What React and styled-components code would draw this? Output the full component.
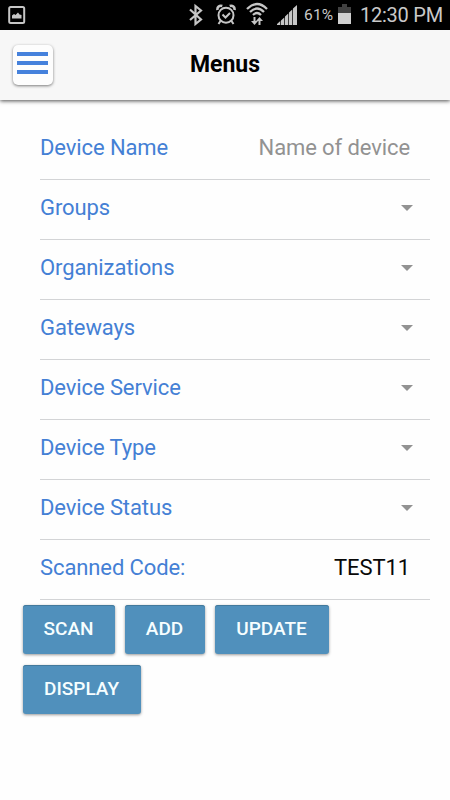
import styled, { createGlobalStyle } from "styled-components";

const GlobalStyle = createGlobalStyle`
  body {
    margin: 0;
    background: #fefefe;
    font-family: Roboto, sans-serif;
  }
`;

const Screen = styled.div`
  display: flex;
  flex-direction: column;
  width: 450px;
  height: 800px;
  overflow: hidden;
  background: #fefefe;
`;

const StatusBar = styled.div`
  display: flex;
  align-items: center;
  flex: none;
  box-sizing: border-box;
  height: 30px;
  padding: 0 7px 0 8px;
  background: #000;
  color: #c9c9c9;
`;

const StatusIcon = styled.svg`
  flex: none;
  display: block;
  width: ${({ $width }) => $width}px;
  height: 30px;
  margin-left: ${({ $gap }) => $gap || 0}px;
  fill: none;
  stroke: #c6c6c6;
`;

const StatusRight = styled.div`
  display: flex;
  align-items: center;
  margin-left: auto;
`;

const Percent = styled.span`
  width: 31px;
  margin-left: 7px;
  font-size: 15.5px;
  letter-spacing: 0.2px;
  line-height: 32px;
  white-space: nowrap;
`;

const Clock = styled.span`
  width: 83px;
  margin-left: 9px;
  font-size: 20px;
  letter-spacing: -0.25px;
  line-height: 32px;
  white-space: nowrap;
`;

const Header = styled.header`
  display: grid;
  grid-template-columns: 42px 1fr 42px;
  align-items: center;
  flex: none;
  box-sizing: border-box;
  height: 70px;
  padding: 0 12px;
  background: #f7f7f7;
  box-shadow: 0 1px 4px rgba(0, 0, 0, 0.7);
`;

const MenuButton = styled.button`
  display: flex;
  flex-direction: column;
  gap: 5px;
  box-sizing: border-box;
  width: 40px;
  height: 40px;
  margin-left: 0.5px;
  padding: 7px 4.5px;
  border: 0;
  border-radius: 5px;
  background: #fdfdfd;
  box-shadow: 0 1px 3px rgba(0, 0, 0, 0.5);
`;

const MenuLine = styled.span`
  flex: none;
  height: 4px;
  background: #4581dc;
`;

const Title = styled.h1`
  margin: 0;
  color: #000;
  font-size: 23px;
  font-weight: 700;
  line-height: 30px;
  text-align: center;
`;

const Form = styled.div`
  display: flex;
  flex-direction: column;
  padding: 20px 20px 0 40px;
`;

const Row = styled.div`
  display: flex;
  align-items: center;
  justify-content: space-between;
  box-sizing: border-box;
  height: 60px;
  padding: 0 20px 4px 0;
  border-bottom: 1px solid #d3d4d6;
`;

const Label = styled.span`
  color: #4480d5;
  font-size: 22px;
  letter-spacing: -0.1px;
  line-height: 28px;
`;

const Value = styled.span`
  color: ${({ $placeholder }) => ($placeholder ? "#929292" : "#080808")};
  font-size: 22px;
  letter-spacing: -0.1px;
  line-height: 28px;
`;

const Arrow = styled.span`
  margin: 0 -3px 0 0;
  border: solid transparent;
  border-width: 6px 6px 0;
  border-top-color: #929292;
`;

const Actions = styled.div`
  display: flex;
  flex-wrap: wrap;
  gap: 11px 10px;
  padding: 5px 23px 0;
`;

const ActionButton = styled.button`
  box-sizing: border-box;
  width: ${({ $width }) => $width}px;
  height: 49px;
  padding: 0 1px 2px 0;
  border: 0;
  border-radius: 3px;
  background: #5090bc;
  box-shadow: 0 1px 3px rgba(0, 0, 0, 0.4), inset 0 1px 0 #42799c;
  color: #f6feff;
  font-family: inherit;
  font-size: 19px;
  font-weight: 500;
`;

const fields = [
  { label: "Device Name", value: "Name of device", placeholder: true },
  { label: "Groups" },
  { label: "Organizations" },
  { label: "Gateways" },
  { label: "Device Service" },
  { label: "Device Type" },
  { label: "Device Status" },
  { label: "Scanned Code:", value: "TEST11" },
];

const actions = [
  { text: "SCAN", width: 92 },
  { text: "ADD", width: 80 },
  { text: "UPDATE", width: 114 },
  { text: "DISPLAY", width: 118 },
];

const PictureIcon = () => (
  <StatusIcon $width={18} viewBox="0 0 18 30">
    <rect x="1.2" y="7" width="15" height="16" rx="1.5" strokeWidth="2" />
    <path d="M4 18.5v-3l2-1.5 1.5 1 2.5-2.5 1.5 2 2 .5v3.5z" fill="#c6c6c6" stroke="none" />
  </StatusIcon>
);

const BluetoothIcon = () => (
  <StatusIcon $width={14} viewBox="0 0 14 30">
    <path d="M1 9.5l11 10-5.500 4.5V6l5.500 4.500L1 20" strokeWidth="2.2" />
  </StatusIcon>
);

const AlarmIcon = () => (
  <StatusIcon $width={20} $gap={13} viewBox="0 0 20 30">
    <circle cx="10" cy="15.2" r="7.5" strokeWidth="2" />
    <path d="M1.5 10C1 7 3.5 5 6.3 6M18.5 10C19 7 16.5 5 13.7 6" strokeWidth="2.6" />
    <path d="M4.5 21l-2 3M15.5 21l2 3M6.5 14.5l3 3 4.5-4.5" strokeWidth="2" />
  </StatusIcon>
);

// wifi fan with the data transfer arrows under it
const WifiIcon = () => (
  <StatusIcon $width={22} $gap={10} viewBox="0 0 22 30">
    <path d="M1 9Q11-1 21 9M4 12Q11 5 18 12M7 15Q11 11 15 15" strokeWidth="2.3" />
    <path d="M8.5 17v6M13.5 19v6" strokeWidth="2" />
    <path d="M5 21l3.5 4 3.5-4zM10 21l3.5-4 3.5 4z" fill="#c6c6c6" stroke="none" />
  </StatusIcon>
);

const SignalIcon = () => (
  <StatusIcon $width={20} $gap={9} viewBox="0 0 20 30">
    <path
      d="M0 25v-1l3.3-3v4zM4 25v-4.5l3.3-3v7.5zM8 25v-8.5l3.3-3v11.5zM12 25V12.5l3.3-3v15.5zM16 25V8.5l4-3.5v20z"
      fill="#c6c6c6"
      stroke="none"
    />
  </StatusIcon>
);

const BatteryIcon = () => (
  <StatusIcon $width={13} $gap={3} viewBox="0 0 13 30">
    <path d="M0 7h4V4h5v3h4v6H0z" fill="#414141" stroke="none" />
    <path d="M0 13h13v11H0z" fill="#d0d0d0" stroke="none" />
  </StatusIcon>
);

const App = () => (
  <>
    <GlobalStyle />
    <Screen>
      <StatusBar>
        <PictureIcon />
        <StatusRight>
          <BluetoothIcon />
          <AlarmIcon />
          <WifiIcon />
          <SignalIcon />
          <Percent>61%</Percent>
          <BatteryIcon />
          <Clock>12:30 PM</Clock>
        </StatusRight>
      </StatusBar>
      <Header>
        <MenuButton aria-label="Menu">
          <MenuLine />
          <MenuLine />
          <MenuLine />
        </MenuButton>
        <Title>Menus</Title>
      </Header>
      <Form>
        {fields.map(({ label, value, placeholder }) => (
          <Row key={label}>
            <Label>{label}</Label>
            {value ? <Value $placeholder={placeholder}>{value}</Value> : <Arrow />}
          </Row>
        ))}
      </Form>
      <Actions>
        {actions.map(({ text, width }) => (
          <ActionButton key={text} $width={width}>{text}</ActionButton>
        ))}
      </Actions>
    </Screen>
  </>
);

export default App;
